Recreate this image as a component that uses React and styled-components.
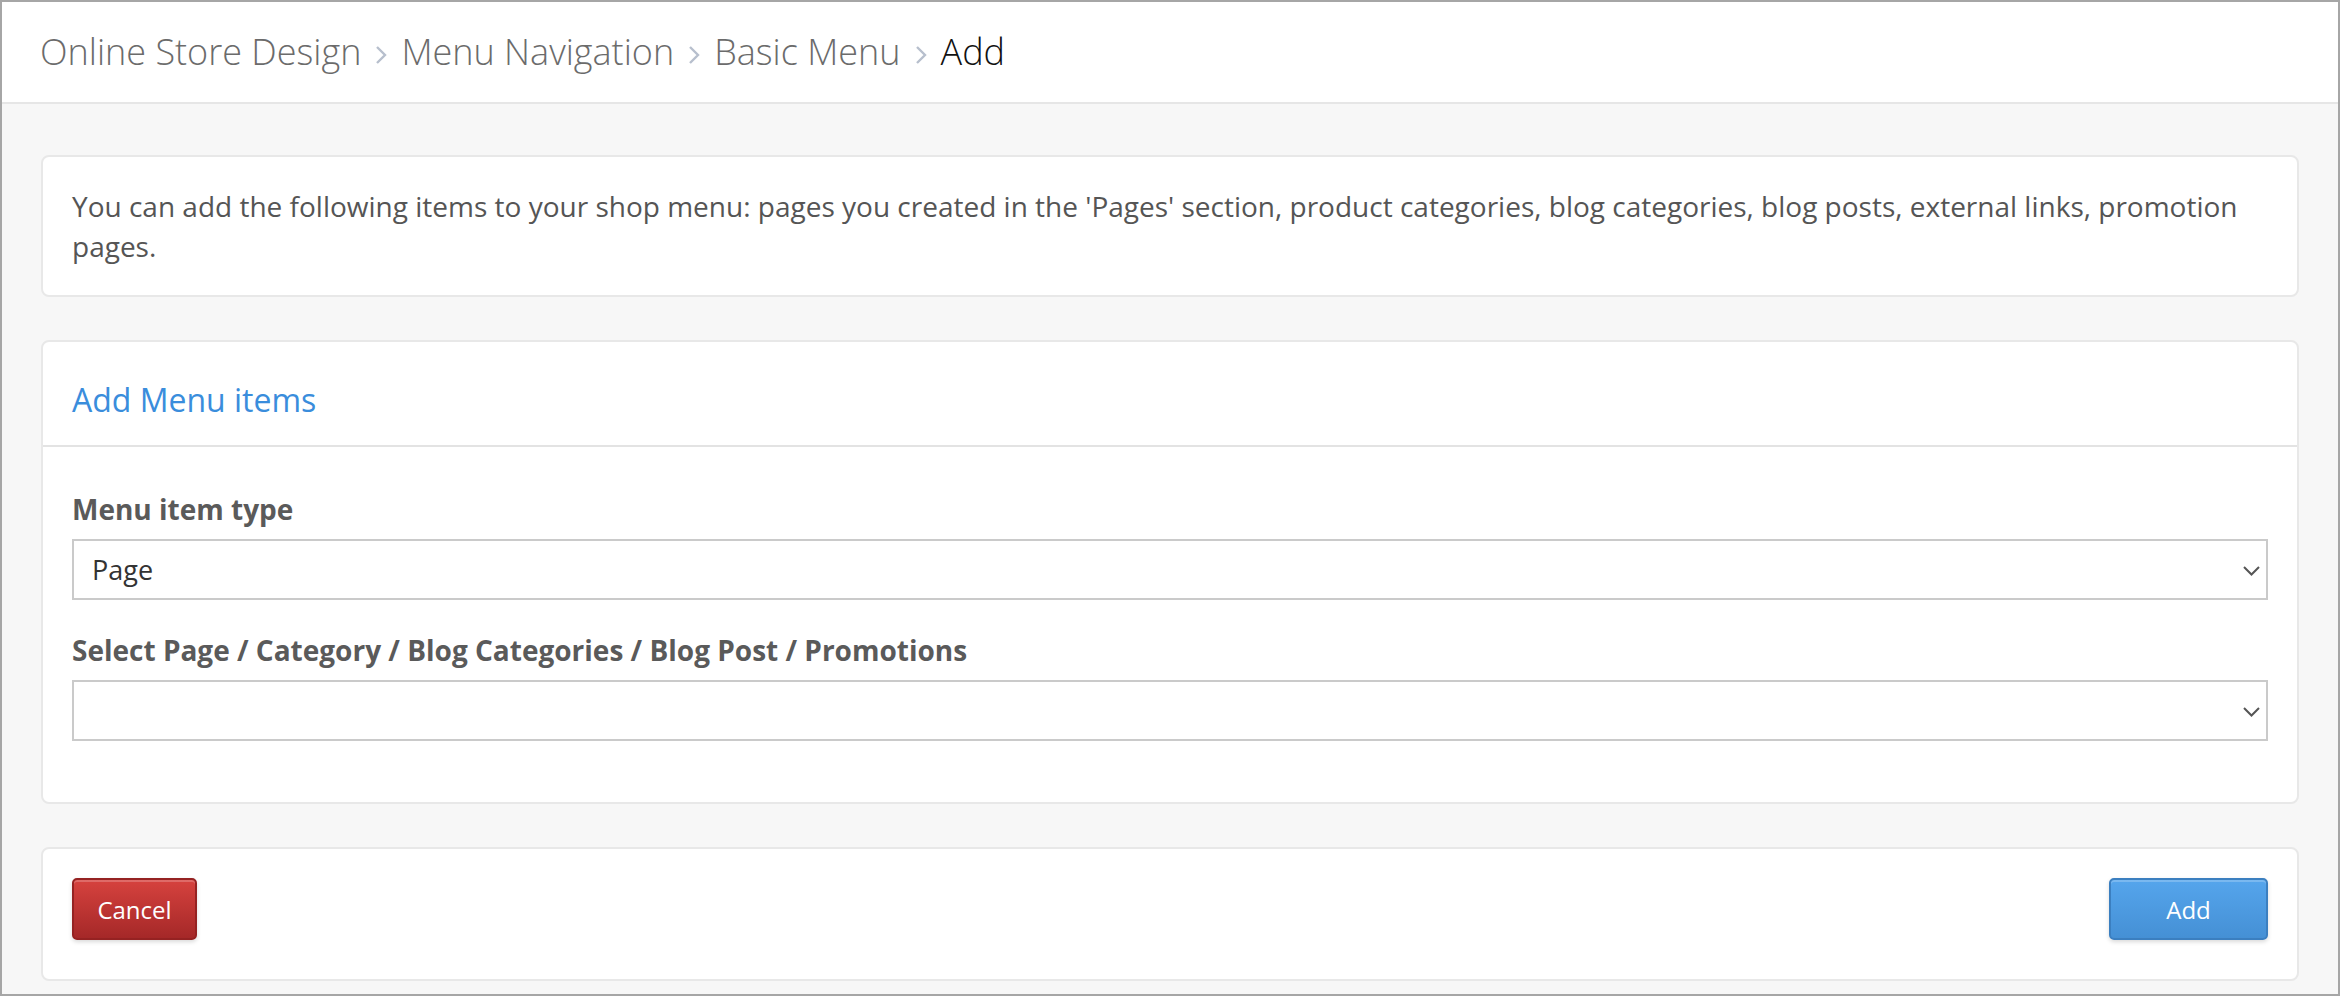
import { styled, createGlobalStyle } from 'styled-components';

const GlobalStyle = createGlobalStyle`
    body {
        margin: 0;
        font-family: "Open Sans", "Liberation Sans", sans-serif;
    }
`;

const Frame = styled.div`
    width: 2340px;
    height: 996px;
    box-sizing: border-box;
    border: 2px solid #a6a6a6;
    background-color: #f7f7f7;
    display: flex;
    flex-direction: column;
    overflow: hidden;
`;

const Header = styled.header`
    height: 100px;
    flex-shrink: 0;
    background-color: white;
    border-bottom: 2px solid #e6e6e6;
    display: flex;
    align-items: center;
    padding-left: 38px;
`;

const Crumb = styled.span`
    font-size: 36px;
    font-weight: 300;
    color: ${(p) => (p.$current ? '#111' : '#6b6b6b')};
    line-height: 1;
`;

const Sep = styled.svg`
    width: 12px;
    height: 20px;
    margin: 2px 14px 0 14px;
`;

const Main = styled.main`
    padding: 51px 39px 0;
    display: flex;
    flex-direction: column;
    gap: 43px;
`;

const Card = styled.section`
    background-color: white;
    border: 2px solid #e8e8e8;
    border-radius: 8px;
`;

const Info = styled.p`
    margin: 0;
    padding: 29px 29px;
    font-size: 28px;
    line-height: 40px;
    color: #555;
`;

const CardHeader = styled.div`
    padding: 40px 29px 27px;
    border-bottom: 2px solid #e3e3e3;
`;

const CardTitle = styled.h2`
    margin: 0;
    font-size: 32px;
    font-weight: 400;
    line-height: 36px;
    color: #3a8ddc;
`;

const CardBody = styled.div`
    padding: 42px 29px 31px;
`;

const FormGroup = styled.div`
    margin-bottom: 30px;
`;

const Label = styled.label`
    display: block;
    font-size: 28px;
    font-weight: 700;
    line-height: 40px;
    color: #5a5a5a;
    margin-bottom: 10px;
`;

const SelectWrap = styled.div`
    position: relative;
`;

const Select = styled.select`
    width: 100%;
    height: 61px;
    box-sizing: border-box;
    appearance: none;
    border: 2px solid #cacaca;
    border-radius: 0;
    background: white;
    padding: 0 18px;
    font-family: "Open Sans", "Liberation Sans", sans-serif;
    font-size: 27px;
    color: #333;
    outline: none;
`;

const Caret = styled.svg`
    position: absolute;
    right: 8px;
    top: 50%;
    width: 17px;
    height: 10px;
    margin-top: -4px;
    pointer-events: none;
`;

const Footer = styled(Card)`
    display: flex;
    justify-content: space-between;
    align-items: center;
    padding: 29px 29px 39px;
`;

const Button = styled.button`
    height: 62px;
    min-width: ${(p) => p.$width}px;
    box-sizing: border-box;
    border-radius: 5px;
    border: 2px solid ${(p) => (p.$danger ? '#952222' : '#3b7fc0')};
    background: ${(p) =>
        p.$danger
            ? 'linear-gradient(#d6423e, #a52828)'
            : 'linear-gradient(#55a5ec, #4590d5)'};
    box-shadow: inset 0 2px 0 rgba(255, 255, 255, 0.22), 0 2px 4px rgba(0, 0, 0, 0.15);
    color: white;
    font-family: "Open Sans", "Liberation Sans", sans-serif;
    font-size: 24px;
    cursor: pointer;
`;

function Chevron() {
    return (
        <Sep viewBox="0 0 12 20">
            <polyline points="2,2 10,10 2,18" fill="none" stroke="#b7bfcd" strokeWidth="2.4" />
        </Sep>
    );
}

function SelectField({ label, value, options }) {
    return (
        <FormGroup>
            <Label>{label}</Label>
            <SelectWrap>
                <Select defaultValue={value}>
                    {options.map((o) => (
                        <option key={o} value={o}>{o}</option>
                    ))}
                </Select>
                <Caret viewBox="0 0 17 10">
                    <polyline points="1,1 8.5,8.5 16,1" fill="none" stroke="#555" strokeWidth="2" />
                </Caret>
            </SelectWrap>
        </FormGroup>
    );
}

const crumbs = ['Online Store Design', 'Menu Navigation', 'Basic Menu'];

export default function App() {
    return (
        <Frame>
            <GlobalStyle />
            <Header>
                {crumbs.map((c) => (
                    <span key={c}>
                        <Crumb>{c}</Crumb>
                        <Chevron />
                    </span>
                ))}
                <Crumb $current>Add</Crumb>
            </Header>
            <Main>
                <Card>
                    <Info>
                        You can add the following items to your shop menu: pages you created in the 'Pages' section, product categories, blog categories, blog posts, external links, promotion pages.
                    </Info>
                </Card>
                <Card>
                    <CardHeader>
                        <CardTitle>Add Menu items</CardTitle>
                    </CardHeader>
                    <CardBody>
                        <SelectField
                            label="Menu item type"
                            value="Page"
                            options={['Page', 'Category', 'Blog category', 'Blog post', 'External link', 'Promotion']}
                        />
                        <SelectField
                            label="Select Page / Category / Blog Categories / Blog Post / Promotions"
                            value=""
                            options={['']}
                        />
                    </CardBody>
                </Card>
                <Footer>
                    <Button $danger $width={125}>Cancel</Button>
                    <Button $width={159}>Add</Button>
                </Footer>
            </Main>
        </Frame>
    );
}
